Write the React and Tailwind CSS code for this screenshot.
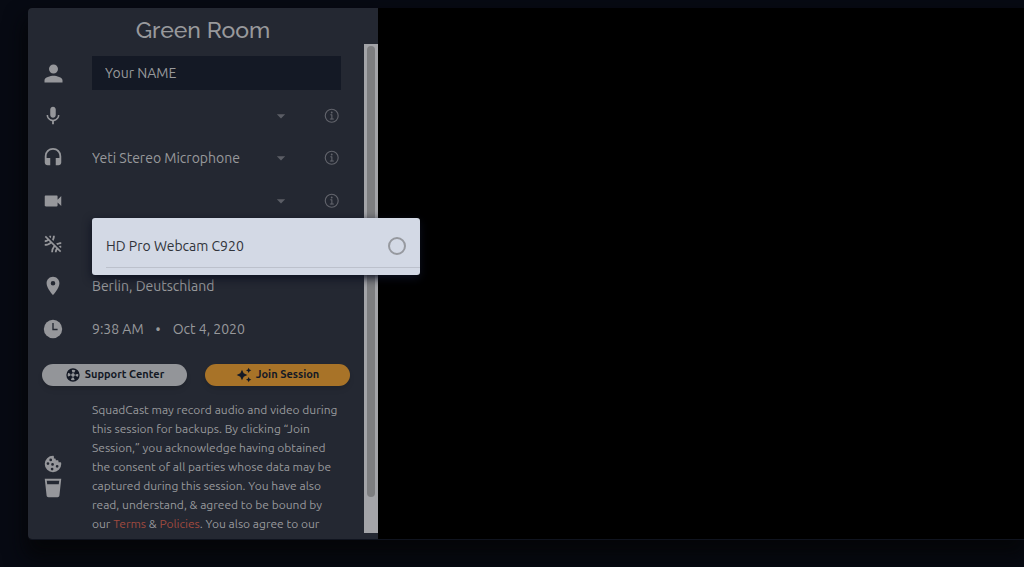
import React, { useState } from "react";
import {
  MdPerson,
  MdMic,
  MdHeadset,
  MdVideocam,
  MdLeakRemove,
  MdLocationOn,
  MdArrowDropDown,
} from "react-icons/md";
import { IoInformationCircleOutline } from "react-icons/io5";

function ClockIcon() {
  return (
    <svg viewBox="0 0 24 24" className="size-[22px]" aria-hidden="true">
      <circle cx="12" cy="12" r="10" fill="currentColor" />
      <path d="M12 5.5v7h5" fill="none" stroke="#242832" strokeWidth="1.5" />
    </svg>
  );
}

function CookieIcon() {
  return (
    <svg viewBox="0 0 24 24" className="size-[22px]" fill="currentColor" aria-hidden="true">
      <path
        fillRule="evenodd"
        d="M12,3A9,9 0 0,0 3,12A9,9 0 0,0 12,21A9,9 0 0,0 21,12C21,11.5 20.96,11 20.87,10.5C20.6,10 20,10 20,10H18V9C18,8 17,8 17,8H15V7C15,6 14,6 14,6H13V4C13,3 12,3 12,3M9.5,6A1.5,1.5 0 0,1 11,7.5A1.5,1.5 0 0,1 9.5,9A1.5,1.5 0 0,1 8,7.5A1.5,1.5 0 0,1 9.5,6M6.5,10A1.5,1.5 0 0,1 8,11.5A1.5,1.5 0 0,1 6.5,13A1.5,1.5 0 0,1 5,11.5A1.5,1.5 0 0,1 6.5,10M11.5,11A1.5,1.5 0 0,1 13,12.5A1.5,1.5 0 0,1 11.5,14A1.5,1.5 0 0,1 10,12.5A1.5,1.5 0 0,1 11.5,11M16.5,13A1.5,1.5 0 0,1 18,14.5A1.5,1.5 0 0,1 16.5,16A1.5,1.5 0 0,1 15,14.5A1.5,1.5 0 0,1 16.5,13M11,16A1.5,1.5 0 0,1 12.5,17.5A1.5,1.5 0 0,1 11,19A1.5,1.5 0 0,1 9.5,17.5A1.5,1.5 0 0,1 11,16Z"
      />
    </svg>
  );
}

function CupIcon() {
  return (
    <svg viewBox="0 0 24 24" className="size-[22px]" fill="currentColor" aria-hidden="true">
      <path
        fillRule="evenodd"
        d="M18.32,8H5.67L5.23,4H18.77L18.32,8M3,2L5,20.23C5.13,21.23 5.97,22 7,22H17C18,22 18.87,21.23 19,20.23L21,2H3Z"
      />
    </svg>
  );
}

function LifebuoyIcon() {
  return (
    <svg viewBox="0 0 24 24" className="size-4" fill="none" stroke="currentColor" aria-hidden="true">
      <circle cx="12" cy="12" r="9" strokeWidth="2" />
      <circle cx="12" cy="12" r="6" strokeWidth="6" strokeDasharray="5 4.42" strokeDashoffset="-2.2" />
      <circle cx="12" cy="12" r="3.5" strokeWidth="1.2" />
    </svg>
  );
}

function SparkleIcon() {
  return (
    <svg viewBox="0 0 24 24" className="size-4" fill="currentColor" aria-hidden="true">
      <path d="M19,1L17.74,3.75L15,5L17.74,6.26L19,9L20.25,6.26L23,5L20.25,3.75M9,4L6.5,9.5L1,12L6.5,14.5L9,20L11.5,14.5L17,12L11.5,9.5M19,15L17.74,17.74L15,19L17.74,20.25L19,23L20.25,20.25L23,19L20.25,17.74" />
    </svg>
  );
}

function Row({ icon, children }) {
  return (
    <div className="flex items-center">
      <span className="flex w-[50px] shrink-0 justify-center text-[#96979b]">{icon}</span>
      <div className="relative ml-3.5 mr-[23px] flex h-[34px] flex-1 items-center">{children}</div>
    </div>
  );
}

function DeviceSelect({ label, value }) {
  return (
    <>
      <select
        aria-label={label}
        defaultValue={value}
        className="h-full min-w-0 flex-1 appearance-none bg-transparent outline-none"
      >
        <option value={value}>{value}</option>
      </select>
      <MdArrowDropDown className="pointer-events-none size-5 text-[#5b5d65]" />
      <button type="button" aria-label={`${label} info`} className="ml-[32px] text-[#62646c]">
        <IoInformationCircleOutline className="size-[18px]" />
      </button>
    </>
  );
}

export default function App() {
  const [name, setName] = useState("Your NAME");

  return (
    <div className="min-h-screen overflow-hidden bg-[#070a13] pl-7 pt-2 font-['Ubuntu','Noto_Sans',sans-serif] text-sm text-[#98999c]">
      <main className="flex rounded-l border-b border-[#10141f] bg-black shadow-[0_14px_20px_4px_#050609]">
        <section className="w-[350px] shrink-0 rounded-l bg-[#242832] pb-1.5">
          <h1 className="h-9 pt-1.5 text-center font-['Raleway','Lato',sans-serif] text-[23px] font-medium leading-8">
            Green Room
          </h1>

          <div className="flex">
            <div className="min-w-0 flex-1 pt-2">
              <div className="grid h-[298px] auto-rows-fr">
                <Row icon={<MdPerson className="size-[27px]" />}>
                  <input
                    aria-label="Name"
                    value={name}
                    onChange={(e) => setName(e.target.value)}
                    className="h-full w-full bg-[#141925] px-[13px] outline-none"
                  />
                </Row>
                <Row icon={<MdMic className="size-[22px]" />}>
                  <DeviceSelect label="Microphone" value="" />
                </Row>
                <Row icon={<MdHeadset className="size-[22px]" />}>
                  <DeviceSelect label="Speakers" value="Yeti Stereo Microphone" />
                </Row>
                <Row icon={<MdVideocam className="size-[22px]" />}>
                  <DeviceSelect label="Camera" value="" />
                  {/* Open camera menu */}
                  <div className="absolute left-0 top-full z-10 h-[57px] w-[328px] rounded-[3px] bg-[#d3d9e5] pl-3.5 text-[#30333a] shadow-[0_3px_10px_#0c1020]">
                    <label className="flex h-[50px] items-center justify-between border-b border-[#bcc1cc] pr-3.5 pt-2">
                      HD Pro Webcam C920
                      <input
                        type="radio"
                        name="camera"
                        className="size-[18px] appearance-none rounded-full border-2 border-[#96999f] checked:bg-[#96999f]"
                      />
                    </label>
                  </div>
                </Row>
                <Row icon={<MdLeakRemove className="size-[22px]" />} />
                <Row icon={<MdLocationOn className="size-[22px]" />}>Berlin, Deutschland</Row>
                <Row icon={<ClockIcon />}>
                  <span>9:38 AM</span>
                  <span className="mx-3">•</span>
                  <span>Oct 4, 2020</span>
                </Row>
              </div>

              <div className="mt-3.5 flex gap-[18px] px-3.5 text-[11px] font-bold text-[#141925]">
                <button
                  type="button"
                  className="flex h-[22px] flex-1 items-center justify-center gap-1 rounded-full bg-[#939599] shadow-md"
                >
                  <LifebuoyIcon />
                  Support Center
                </button>
                <button
                  type="button"
                  className="flex h-[22px] flex-1 items-center justify-center gap-1 rounded-full bg-[#a87328] shadow-md"
                >
                  <SparkleIcon />
                  Join Session
                </button>
              </div>

              <div className="mt-3.5 flex">
                <div className="flex w-[50px] shrink-0 flex-col items-center justify-center gap-0.5 pt-[18px] text-[#96979b]">
                  <CookieIcon />
                  <CupIcon />
                </div>
                <p className="ml-3.5 whitespace-nowrap text-xs leading-[19px]">
                  SquadCast may record audio and video during
                  <br />
                  this session for backups. By clicking “Join
                  <br />
                  Session,” you acknowledge having obtained
                  <br />
                  the consent of all parties whose data may be
                  <br />
                  captured during this session. You have also
                  <br />
                  read, understand, &amp; agreed to be bound by
                  <br />
                  our <a href="#terms" className="text-[#a04a3f]">Terms</a> &amp;{" "}
                  <a href="#policies" className="text-[#a04a3f]">Policies</a>. You also agree to our
                </p>
              </div>
            </div>

            {/* Scrollbar track and thumb */}
            <div className="flex w-3.5 shrink-0 flex-col items-center bg-[#a3a4a8] pb-9 pt-0.5">
              <div className="w-2 flex-1 rounded-full bg-[#7d7e80]" />
            </div>
          </div>
        </section>
      </main>
    </div>
  );
}
